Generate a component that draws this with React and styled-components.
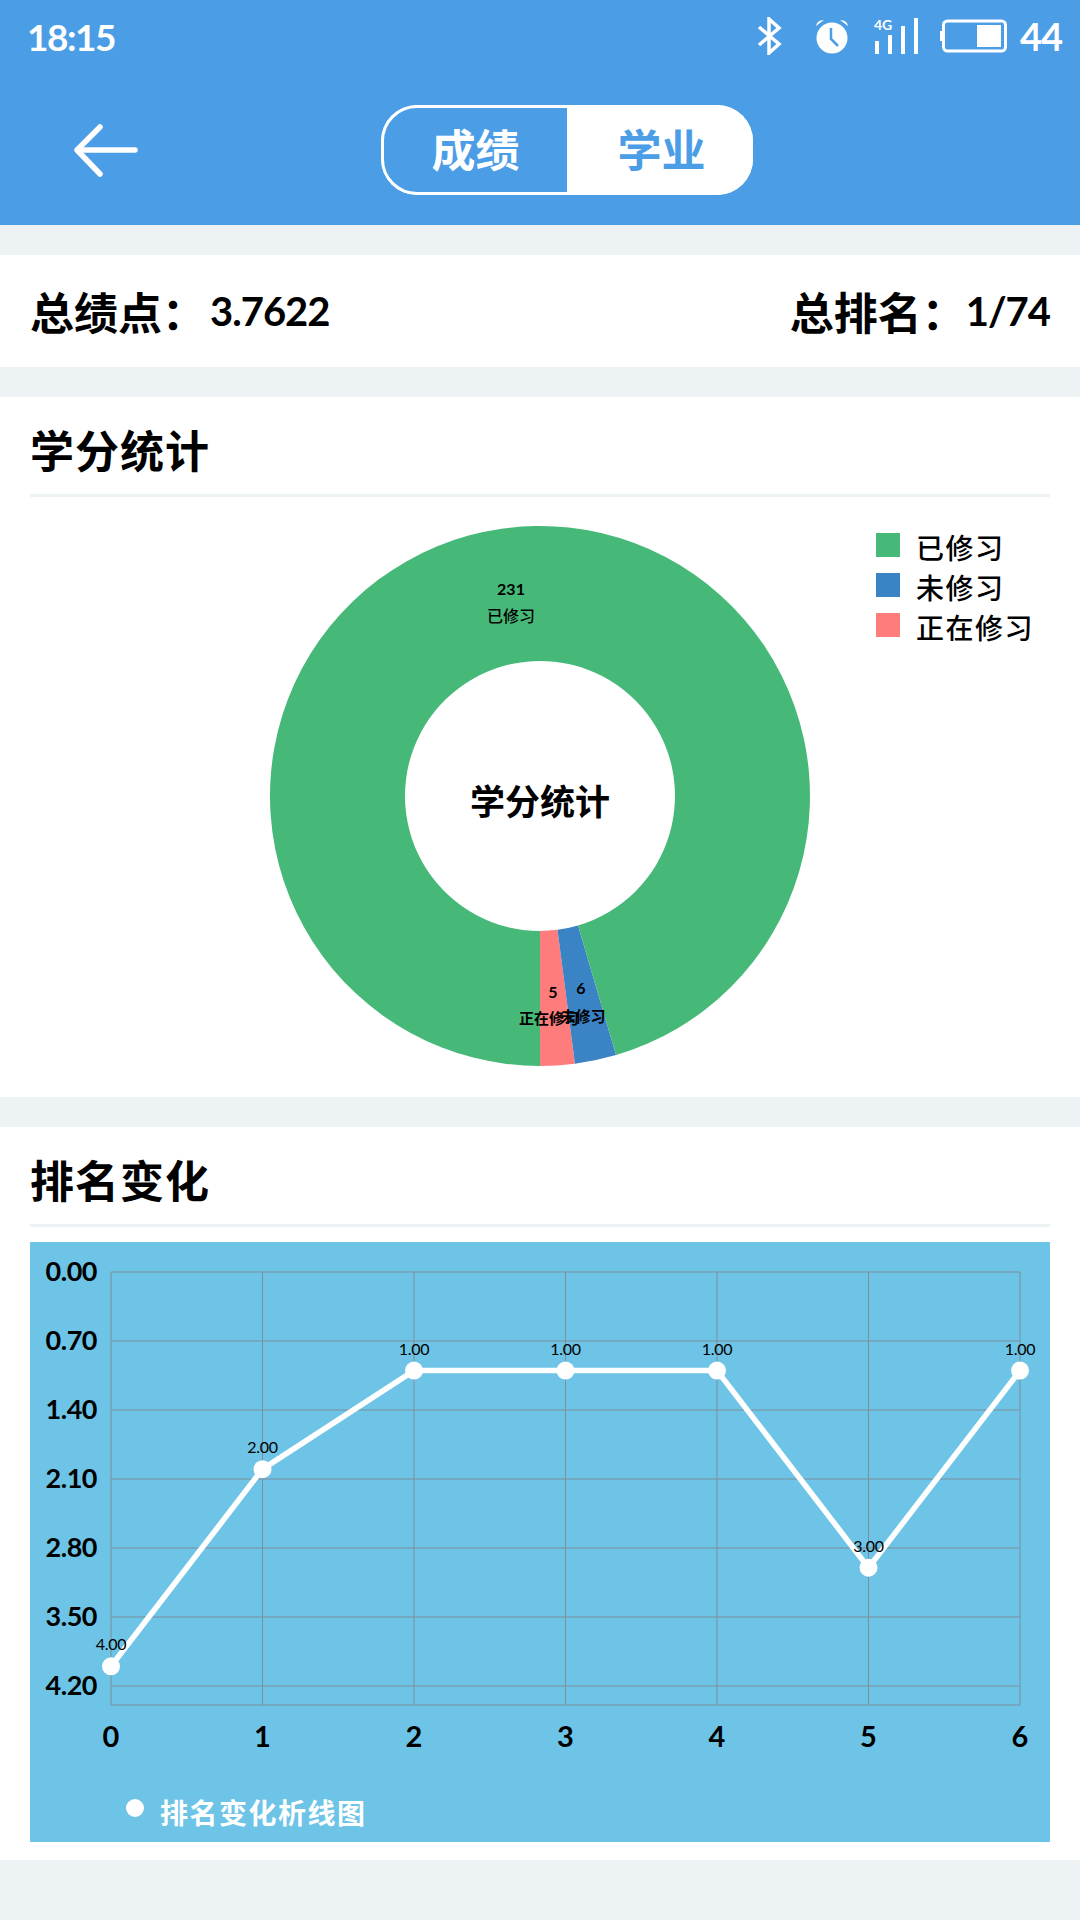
import React from 'react';
import styled, { createGlobalStyle } from 'styled-components';

const CN = '"Noto Sans CJK SC", "Noto Sans", sans-serif';
const NUM = 'Lato, "Noto Sans CJK SC", sans-serif';
const BLUE = '#4b9de6';

const Global = createGlobalStyle`
    html, body {
        margin: 0;
        padding: 0;
        background: #edf2f5;
    }
    body {
        font-family: ${CN};
        color: #000;
    }
`;

const Page = styled.div`
    width: 1080px;
    height: 1920px;
    overflow: hidden;
    display: flex;
    flex-direction: column;
    gap: 30px;
`;

const Header = styled.header`
    height: 225px;
    background: ${BLUE};
    color: #fff;
`;

const StatusBar = styled.div`
    height: 72px;
    padding: 0 18px 0 27px;
    display: flex;
    align-items: center;
    justify-content: space-between;
`;

const Time = styled.span`
    font: 700 37px ${NUM};
    letter-spacing: -1.5px;
`;

const StatusIcons = styled.div`
    display: flex;
    align-items: center;
`;

const StatusSvg = styled.svg`
    display: block;
    margin-right: ${p => p.$after}px;
`;

const Battery = styled.span`
    font: 700 38px ${NUM};
    letter-spacing: -1px;
`;

const NavBar = styled.div`
    padding: 33px 0 0 74px;
    display: flex;
    align-items: center;
`;

const Tabs = styled.div`
    margin-left: 243px;
    width: 372px;
    height: 90px;
    display: flex;
    border-radius: 36px;
    overflow: hidden;
    background: #fff;
`;

const Tab = styled.div`
    flex: 1;
    display: flex;
    align-items: center;
    justify-content: center;
    padding-bottom: 4px;
    font-size: 44px;
    font-weight: 700;
    box-sizing: border-box;
    color: ${p => (p.$active ? '#fff' : BLUE)};
    background: ${p => (p.$active ? BLUE : '#fff')};
    border: ${p => (p.$active ? '3px solid #fff' : 'none')};
    border-radius: ${p => (p.$active ? '36px 0 0 36px' : '0')};
`;

const Card = styled.section`
    background: #fff;
    padding: 0 30px;
`;

const Summary = styled(Card)`
    height: 112px;
    display: flex;
    align-items: center;
    justify-content: space-between;
`;

const Stat = styled.div`
    font-size: 44px;
    font-weight: 700;
    line-height: 1;
    display: flex;
    align-items: center;
`;

const StatValue = styled.span`
    margin-left: ${p => p.$gap || 0}px;
    font: 700 40px ${NUM};
    letter-spacing: -1px;
`;

const SectionTitle = styled.h2`
    margin: 0;
    height: 100px;
    box-sizing: border-box;
    padding-top: 24px;
    border-bottom: 3px solid #edf2f5;
    font-size: 44px;
    font-weight: 700;
    line-height: 56px;
    letter-spacing: 1px;
`;

const CreditsCard = styled(Card)`
    height: 700px;
`;

const PieArea = styled.div`
    position: relative;
    padding-top: 29px;
    display: flex;
    justify-content: center;
`;

const PieLegend = styled.ul`
    position: absolute;
    top: 28px;
    left: 846px;
    margin: 0;
    padding: 0;
    list-style: none;
    display: flex;
    flex-direction: column;
    gap: 0;
`;

const LegendRow = styled.li`
    height: 40px;
    display: flex;
    align-items: center;
    gap: 16px;
    font-size: 28px;
    font-weight: 500;
    letter-spacing: 1.5px;
    white-space: nowrap;
`;

const LegendText = styled.span`
    padding-top: 4px;
`;

const Swatch = styled.i`
    width: 24px;
    height: 24px;
    background: ${p => p.$color};
`;

const RankCard = styled(Card)`
    height: 733px;
`;

const ChartPanel = styled.div`
    margin-top: 15px;
    height: 600px;
    background: #6dc4e6;
    display: flex;
    flex-direction: column;
`;

const ChartSvg = styled.svg`
    display: block;
    flex: none;
`;

const ChartLegend = styled.div`
    display: flex;
    align-items: center;
    gap: 16px;
    padding-left: 96px;
    height: 60px;
    color: #fff;
    font-size: 28px;
    font-weight: 700;
    letter-spacing: 1.5px;
`;

const Dot = styled.i`
    width: 18px;
    height: 18px;
    margin-top: -8px;
    border-radius: 50%;
    background: #fff;
`;

const slices = [
    { name: '已修习', value: 231, color: '#46b978' },
    { name: '未修习', value: 6, color: '#3a84c6' },
    { name: '正在修习', value: 5, color: '#ff7c7c' },
];

// angle measured from the bottom of the ring, going towards the right
function ringSlice(from, to, outer, inner) {
    const pt = (a, r) => {
        const rad = (a * Math.PI) / 180;
        return `${(270 + r * Math.sin(rad)).toFixed(2)} ${(270 + r * Math.cos(rad)).toFixed(2)}`;
    };
    const large = to - from > 180 ? 1 : 0;
    return `M${pt(from, outer)} A${outer} ${outer} 0 ${large} 0 ${pt(to, outer)} L${pt(to, inner)} A${inner} ${inner} 0 ${large} 1 ${pt(from, inner)} Z`;
}

function Donut() {
    const total = 242;
    const pink = (5 / total) * 360;
    const blue = (6 / total) * 360;
    return (
        <svg width="540" height="540" viewBox="0 0 540 540" style={{ display: 'block' }}>
            <path d={ringSlice(0, pink, 270, 135)} fill={slices[2].color} />
            <path d={ringSlice(pink, pink + blue, 270, 135)} fill={slices[1].color} />
            <path d={ringSlice(pink + blue, 360, 270, 135)} fill={slices[0].color} />
            <g fontFamily={CN} textAnchor="middle" fill="#000">
                <text x="241" y="69" fontSize="16" fontFamily={NUM} fontWeight="700">231</text>
                <text x="241" y="96" fontSize="16" fontWeight="500">已修习</text>
                <text x="283" y="472" fontSize="16" fontFamily={NUM} fontWeight="700">5</text>
                <text x="311" y="468" fontSize="16" fontFamily={NUM} fontWeight="700">6</text>
                <text x="279" y="498" fontSize="15" fontWeight="700">正在修习</text>
                <text x="313" y="496" fontSize="15" fontWeight="700">未修习</text>
                <text x="270" y="289" fontSize="35" fontWeight="700">学分统计</text>
            </g>
        </svg>
    );
}

const GRID_X = 81;
const GRID_TOP = 30;
const STEP_X = 151.5;
const STEP_Y = 69;
const ranks = [4, 2, 1, 1, 1, 3, 1];
const yTicks = ['0.00', '0.70', '1.40', '2.10', '2.80', '3.50', '4.20'];

function RankChart() {
    const xs = ranks.map((_, i) => GRID_X + i * STEP_X);
    const ys = ranks.map(r => GRID_TOP + (r / 0.7) * STEP_Y);
    const right = GRID_X + 6 * STEP_X;
    const bottom = GRID_TOP + 433;
    return (
        <ChartSvg width="1020" height="540" viewBox="0 0 1020 540">
            <g stroke="#7d8f98" strokeWidth="1">
                {yTicks.map((t, i) => (
                    <line key={t} x1={GRID_X} x2={right} y1={GRID_TOP + i * STEP_Y} y2={GRID_TOP + i * STEP_Y} />
                ))}
                <line x1={GRID_X} x2={right} y1={bottom} y2={bottom} />
                {xs.map(x => (
                    <line key={x} x1={x} x2={x} y1={GRID_TOP} y2={bottom} />
                ))}
            </g>
            <g fontFamily={NUM} fontSize="27" fontWeight="700" fill="#000" textAnchor="end">
                {yTicks.map((t, i) => (
                    <text key={t} x="67" y={GRID_TOP + i * STEP_Y + 9} letterSpacing="-0.5">{t}</text>
                ))}
            </g>
            <g fontFamily={NUM} fontSize="29" fontWeight="700" fill="#000" textAnchor="middle">
                {xs.map((x, i) => (
                    <text key={x} x={x} y="505">{i}</text>
                ))}
            </g>
            <polyline
                points={xs.map((x, i) => `${x},${ys[i]}`).join(' ')}
                fill="none"
                stroke="#fff"
                strokeWidth="5.5"
                strokeLinejoin="round"
            />
            {xs.map((x, i) => (
                <circle key={x} cx={x} cy={ys[i]} r="9" fill="#fff" />
            ))}
            <g fontFamily={NUM} fontSize="16" fill="#000" textAnchor="middle" letterSpacing="-0.3">
                {xs.map((x, i) => (
                    <text key={x} x={x} y={ys[i] - 16}>{ranks[i].toFixed(2)}</text>
                ))}
            </g>
        </ChartSvg>
    );
}

const BackIcon = () => (
    <svg width="64" height="56" viewBox="0 0 64 56" fill="none" stroke="#fff" strokeWidth="5.5" strokeLinecap="round" strokeLinejoin="round">
        <path d="M26 5 L3 28 L26 52" />
        <path d="M4 28 H61" />
    </svg>
);

const StatusGlyphs = () => (
    <StatusIcons>
        <StatusSvg $after={32} width="25" height="38" viewBox="0 0 25 38" fill="none" stroke="#fff" strokeWidth="3.5">
            <path d="M2 10 L22 27 L12 36 V2 L22 11 L2 28" />
        </StatusSvg>
        <StatusSvg $after={24} width="36" height="36" viewBox="0 0 36 36">
            <circle cx="18" cy="20" r="15.5" fill="#fff" />
            <path d="M2 8 Q3 2 10 2 Z M34 8 Q33 2 26 2 Z" fill="#fff" />
            <path d="M17 10 V21 L24 28" fill="none" stroke={BLUE} strokeWidth="2.5" />
        </StatusSvg>
        <StatusSvg $after={16} width="50" height="38" viewBox="0 0 50 38">
            <text x="0" y="13" fontSize="14" fontWeight="700" fontFamily={NUM} fill="#fff">4G</text>
            <rect x="1" y="24" width="4" height="13" fill="#fff" />
            <rect x="14" y="18" width="4" height="19" fill="#fff" />
            <rect x="27" y="9" width="4" height="28" fill="#fff" />
            <rect x="40" y="1" width="4" height="36" fill="#fff" />
        </StatusSvg>
        <StatusSvg $after={12} width="68" height="34" viewBox="0 0 68 34">
            <rect x="0" y="12" width="3" height="10" fill="#fff" />
            <rect x="3.5" y="2" width="62" height="30" rx="4" fill="none" stroke="#fff" strokeWidth="3" />
            <rect x="37" y="6" width="24" height="22" fill="#fff" />
        </StatusSvg>
        <Battery>44</Battery>
    </StatusIcons>
);

export default function App() {
    return (
        <Page>
            <Global />
            <Header>
                <StatusBar>
                    <Time>18:15</Time>
                    <StatusGlyphs />
                </StatusBar>
                <NavBar>
                    <BackIcon />
                    <Tabs>
                        <Tab $active>成绩</Tab>
                        <Tab>学业</Tab>
                    </Tabs>
                </NavBar>
            </Header>

            <Summary>
                <Stat>总绩点：<StatValue $gap={4}>3.7622</StatValue></Stat>
                <Stat>总排名：<StatValue>1/74</StatValue></Stat>
            </Summary>

            <CreditsCard>
                <SectionTitle>学分统计</SectionTitle>
                <PieArea>
                    <Donut />
                    <PieLegend>
                        {slices.map(s => (
                            <LegendRow key={s.name}>
                                <Swatch $color={s.color} />
                                <LegendText>{s.name}</LegendText>
                            </LegendRow>
                        ))}
                    </PieLegend>
                </PieArea>
            </CreditsCard>

            <RankCard>
                <SectionTitle>排名变化</SectionTitle>
                <ChartPanel>
                    <RankChart />
                    <ChartLegend>
                        <Dot />
                        排名变化析线图
                    </ChartLegend>
                </ChartPanel>
            </RankCard>
        </Page>
    );
}
